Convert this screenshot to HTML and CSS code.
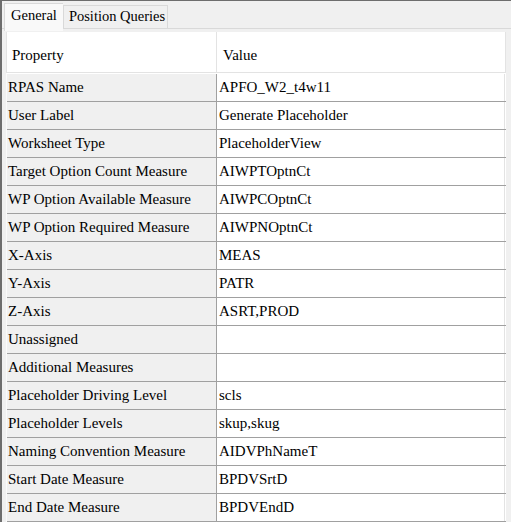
FILE: index.html
```html
<!DOCTYPE html>
<html>
<head>
<meta charset="utf-8">
<link rel="stylesheet" href="styles.css">
</head>
<body>
<div class="window">
  <div class="tabs">
    <div class="tab active">General</div>
    <div class="tab">Position Queries</div>
  </div>
  <div class="panel">
    <div class="grid">
      <div class="head">
        <div class="hcell prop">Property</div>
        <div class="hcell val">Value</div>
      </div>
      <div class="rows">
        <div class="row"><div class="cell prop">RPAS Name</div><div class="cell val">APFO_W2_t4w11</div></div>
        <div class="row"><div class="cell prop">User Label</div><div class="cell val">Generate Placeholder</div></div>
        <div class="row"><div class="cell prop">Worksheet Type</div><div class="cell val">PlaceholderView</div></div>
        <div class="row"><div class="cell prop">Target Option Count Measure</div><div class="cell val">AIWPTOptnCt</div></div>
        <div class="row"><div class="cell prop">WP Option Available Measure</div><div class="cell val">AIWPCOptnCt</div></div>
        <div class="row"><div class="cell prop">WP Option Required Measure</div><div class="cell val">AIWPNOptnCt</div></div>
        <div class="row"><div class="cell prop">X-Axis</div><div class="cell val">MEAS</div></div>
        <div class="row"><div class="cell prop">Y-Axis</div><div class="cell val">PATR</div></div>
        <div class="row"><div class="cell prop">Z-Axis</div><div class="cell val">ASRT,PROD</div></div>
        <div class="row"><div class="cell prop">Unassigned</div><div class="cell val"></div></div>
        <div class="row"><div class="cell prop">Additional Measures</div><div class="cell val"></div></div>
        <div class="row"><div class="cell prop">Placeholder Driving Level</div><div class="cell val">scls</div></div>
        <div class="row"><div class="cell prop">Placeholder Levels</div><div class="cell val">skup,skug</div></div>
        <div class="row"><div class="cell prop">Naming Convention Measure</div><div class="cell val">AIDVPhNameT</div></div>
        <div class="row"><div class="cell prop">Start Date Measure</div><div class="cell val">BPDVSrtD</div></div>
        <div class="row"><div class="cell prop">End Date Measure</div><div class="cell val">BPDVEndD</div></div>
      </div>
    </div>
  </div>
</div>
</body>
</html>
```

FILE: styles.css
```css
* { box-sizing: border-box; }

html, body {
  margin: 0;
  padding: 0;
  background: #f0f0f0;
}

body {
  font-family: "Liberation Serif", "Times New Roman", serif;
  font-size: 15px;
  line-height: 17px;
  color: #000;
}

.window {
  width: 511px;
  height: 522px;
  overflow: hidden;
  border-top: 1px solid #6d6d6d;
  border-left: 2px solid #6d6d6d;
}

.tabs {
  display: flex;
  align-items: flex-end;
  height: 27px;
  padding-left: 2px;
}

.tab {
  font-size: 14.5px;
  border: 1px solid #d9d9d9;
  border-bottom: none;
  background: #f0f0f0;
  padding: 2px 2px 3px 5px;
  white-space: nowrap;
}

.tab.active {
  position: relative;
  z-index: 1;
  background: #f9f9f9;
  padding: 3px 6px 7px 6px;
  margin-bottom: -3px;
  border-right: none;
}

.panel {
  border-top: 1px solid #d9d9d9;
  padding: 3px 4px 0 4px;
}

.grid {
  width: 500px;
}

.head {
  display: flex;
  height: 41px;
}

.hcell {
  background: #fff;
  border-bottom: 1px solid #e3e3e3;
  padding: 15px 0 0 5px;
}

.hcell.prop {
  width: 211px;
  border-left: 1px solid #e3e3e3;
  border-right: 1px solid #e3e3e3;
}

.hcell.val {
  flex: 1;
  border-right: 1px solid #e3e3e3;
  padding-left: 6px;
}

.rows {
  border-top: 1px solid #fff;
  border-left: 1px solid #fafafa;
}

.row {
  display: flex;
  height: 28px;
  border-bottom: 1px solid #a0a0a0;
  background: #fff;
}

.cell {
  padding: 5px 0 5px 1px;
  white-space: nowrap;
}

.cell.prop {
  width: 210px;
  background: #f0f0f0;
  border-right: 1px solid #a0a0a0;
}

.cell.val {
  flex: 1;
  background: #fff;
  padding-left: 2px;
  margin-right: 1px;
  border-right: 1px solid #e3e3e3;
}
```
